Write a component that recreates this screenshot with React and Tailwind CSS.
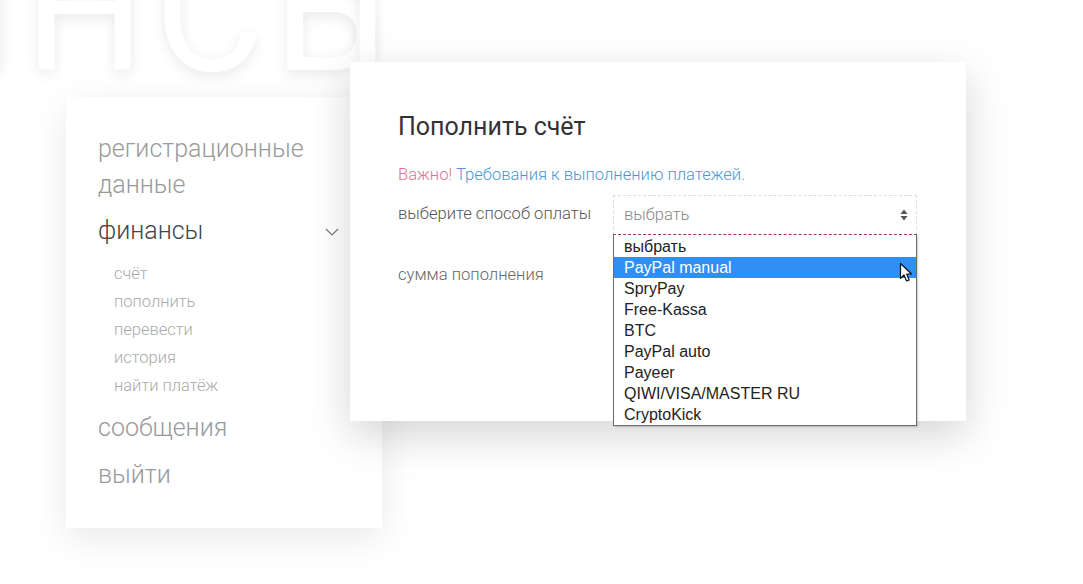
import React from "react";

const subItems = ["счёт", "пополнить", "перевести", "история", "найти платёж"];
const options = [
  "выбрать",
  "PayPal manual",
  "SpryPay",
  "Free-Kassa",
  "BTC",
  "PayPal auto",
  "Payeer",
  "QIWI/VISA/MASTER RU",
  "CryptoKick",
];

function Cursor() {
  return (
    <svg width="16" height="22" viewBox="0 0 16 22" className="absolute right-[1px] top-[5px]">
      <path
        d="M1.5 1.5 L1.5 16.5 L5 13 L7.6 19 L10.2 17.9 L7.7 12 L12.5 12 Z"
        fill="#fff"
        stroke="#111"
        strokeWidth="1.2"
        strokeLinejoin="round"
      />
    </svg>
  );
}

export default function App() {
  return (
    <div
      className="relative w-[1083px] h-[584px] overflow-hidden bg-white"
      style={{ fontFamily: "Roboto, 'Liberation Sans', sans-serif" }}
    >
      {/* giant faded background word */}
      <div
        className="absolute left-[-105px] top-[-71px] text-[168px] leading-none font-normal text-white tracking-[10px] whitespace-nowrap select-none"
        style={{ textShadow: "0 4px 14px rgba(0,0,0,0.09)" }}
      >
        ИНСБ<span className="ml-[-45px]">Г</span>
      </div>

      <div className="relative flex items-start pl-[66px]">
        {/* sidebar */}
        <div className="mt-[97px] w-[316px] h-[431px] bg-white shadow-[0_10px_35px_rgba(0,0,0,0.09)] pl-[32px] pr-[43px] pt-[34px] font-light">
          <div className="text-[25px] leading-[36px] text-[#9a9a9a]">
            регистрационные
            <br />
            данные
          </div>
          <div className="mt-[10px] flex items-center justify-between text-[25px] leading-[36px] text-[#444]">
            <span>финансы</span>
            <svg width="14" height="8" viewBox="0 0 14 8" className="mt-[2px]">
              <path d="M1 1 L7 7 L13 1" fill="none" stroke="#777" strokeWidth="1.2" />
            </svg>
          </div>
          <div className="mt-[11px] pl-[16px] flex flex-col">
            {subItems.map((s) => (
              <div key={s} className="text-[16.5px] leading-[28px] text-[#aaa]">
                {s}
              </div>
            ))}
          </div>
          <div className="mt-[10px] text-[25px] leading-[36px] text-[#9a9a9a]">сообщения</div>
          <div className="mt-[11px] text-[25px] leading-[36px] text-[#9a9a9a]">выйти</div>
        </div>

        {/* main card */}
        <div className="relative z-10 ml-[-32px] mt-[62px] w-[616px] h-[359px] bg-white shadow-[0_14px_40px_rgba(0,0,0,0.17)] pl-[48px] pr-[49px] pt-[49px]">
          <h1 className="text-[25px] leading-[32px] text-[#333] font-normal">Пополнить счёт</h1>
          <p className="mt-[20px] text-[16.6px] leading-[24px] font-light">
            <span className="text-[#e0718f]">Важно!</span>{" "}
            <span className="text-[#4a97d2]">Требования к выполнению платежей.</span>
          </p>
          <div className="mt-[8px] flex items-start">
            <div className="w-[215px] pt-[7px] text-[16.6px] leading-[24px] font-light text-[#555]">
              выберите способ оплаты
            </div>
            <div className="relative w-[304px]">
              <div className="h-[40px] border border-dashed border-[#dcdcdc] border-b-[#a8385a] flex items-center justify-between pl-[10px] pr-[8px]">
                <span className="text-[16.6px] font-light text-[#888]">выбрать</span>
                <svg width="8" height="12" viewBox="0 0 8 12">
                  <path d="M4 0.5 L7.5 5 L0.5 5 Z M4 11.5 L7.5 7 L0.5 7 Z" fill="#555" />
                </svg>
              </div>
              {/* open dropdown list */}
              <div
                className="absolute left-0 top-[39px] w-[304px] bg-white border border-[#6b6b6b] border-t-[#a8385a] [border-top-style:dashed] pt-[1px] shadow-[1px_1px_2px_rgba(0,0,0,0.2)]"
                style={{ fontFamily: "'Liberation Sans', Arial, sans-serif" }}
              >
                {options.map((o, i) => (
                  <div
                    key={o}
                    className={
                      i === 1
                        ? "relative h-[21px] leading-[21px] pl-[10px] text-[16px] bg-[#2f8ff5] text-white"
                        : "h-[21px] leading-[21px] pl-[10px] text-[16px] text-[#222]"
                    }
                  >
                    {o}
                    {i === 1 && <Cursor />}
                  </div>
                ))}
              </div>
            </div>
          </div>
          <div className="mt-[28px] flex">
            <div className="w-[215px] text-[16.6px] leading-[24px] font-light text-[#666]">сумма пополнения</div>
          </div>
        </div>
      </div>
    </div>
  );
}
